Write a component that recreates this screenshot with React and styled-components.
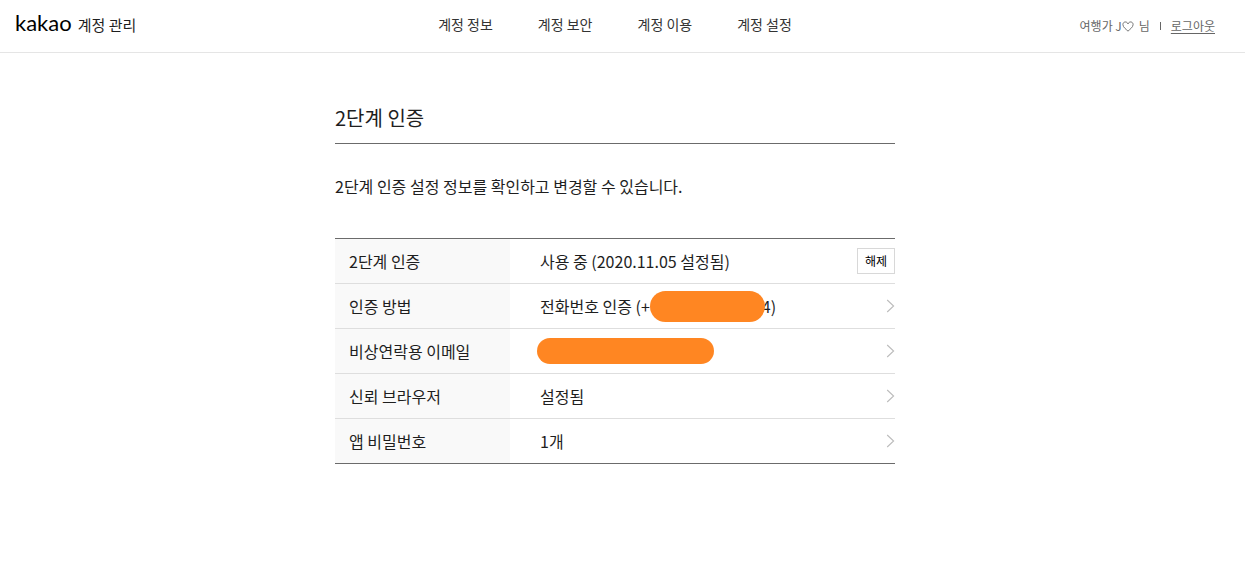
import styled, { createGlobalStyle } from 'styled-components'

const menus = ['계정 정보', '계정 보안', '계정 이용', '계정 설정']

const Arrow = () => (
  <svg width="9" height="14" viewBox="0 0 9 14" fill="none" aria-hidden="true">
    <path d="M1.2 1 L7.6 7 L1.2 13" stroke="#bcbcbc" strokeWidth="1.1" />
  </svg>
)

const SettingRow = ({ label, action, children }) => {
  return (
    <tr>
      <Label scope="row">{label}</Label>
      <Cell>
        <CellContent>
          <Value>{children}</Value>
          {action || (
            <MoreLink href="#" aria-label={label}>
              <Arrow />
            </MoreLink>
          )}
        </CellContent>
      </Cell>
    </tr>
  )
}

const App = () => {
  return (
    <>
      <GlobalStyle />
      <Header>
        <Brand href="#">
          <Logo>kakao</Logo>
          <ServiceName>계정 관리</ServiceName>
        </Brand>
        <Nav>
          {menus.map(menu => (
            <NavLink href="#" key={menu}>{menu}</NavLink>
          ))}
        </Nav>
        <UserInfo>
          <UserName>
            여행가 J
            <svg width="12" height="11" viewBox="0 0 12 11" fill="none" role="img" aria-label="♡">
              <path
                d="M6 10.2 C4.6 8.6 0.9 6.4 0.9 3.6 C0.9 0.4 5 0 6 2.9 C7 0 11.1 0.4 11.1 3.6 C11.1 6.4 7.4 8.6 6 10.2 Z"
                stroke="#666"
                strokeWidth="0.9"
              />
            </svg>
            <Honorific>님</Honorific>
          </UserName>
          <Divider />
          <Logout href="#">로그아웃</Logout>
        </UserInfo>
      </Header>
      <Main>
        <Title>2단계 인증</Title>
        <Description>2단계 인증 설정 정보를 확인하고 변경할 수 있습니다.</Description>
        <Table>
          <tbody>
            <SettingRow label="2단계 인증" action={<Button type="button">해제</Button>}>
              사용 중 (2020.11.05 설정됨)
            </SettingRow>
            <SettingRow label="인증 방법">
              전화번호 인증 (+<PhoneMask />4)
            </SettingRow>
            <SettingRow label="비상연락용 이메일">
              <EmailMask />
            </SettingRow>
            <SettingRow label="신뢰 브라우저">설정됨</SettingRow>
            <SettingRow label="앱 비밀번호">1개</SettingRow>
          </tbody>
        </Table>
      </Main>
    </>
  )
}

const GlobalStyle = createGlobalStyle`
  * {
    box-sizing: border-box;
  }
  body {
    margin: 0;
    background-color: #fff;
    color: #1e1e1e;
    font-family: 'Noto Sans CJK KR', 'Liberation Sans', sans-serif;
    font-size: 16px;
    line-height: 24px;
  }
  a {
    color: inherit;
    text-decoration: none;
  }
`

const Header = styled.header`
  display: grid;
  grid-template-columns: 1fr auto 1fr;
  align-items: center;
  height: 53px;
  padding: 0 30px 4px 15px;
  border-bottom: 1px solid #e5e5e5;
`

const Brand = styled.a`
  display: flex;
  align-items: baseline;
  gap: 6px;
  color: #000;
`

const Logo = styled.span`
  font-family: Lato, 'Open Sans', sans-serif;
  font-size: 22px;
`

const ServiceName = styled.span`
  font-size: 15px;
  color: #1e1e1e;
`

const Nav = styled.nav`
  display: flex;
  gap: 45px;
`

const NavLink = styled.a`
  font-size: 14px;
  color: #333;
`

const UserInfo = styled.div`
  display: flex;
  justify-content: flex-end;
  align-items: center;
  gap: 10px;
  padding-top: 4px;
  font-size: 12px;
  line-height: 18px;
  color: #666;
`

const UserName = styled.span`
  display: flex;
  align-items: center;
`

const Honorific = styled.span`
  margin-left: 5px;
`

const Divider = styled.span`
  width: 1px;
  height: 8px;
  background-color: #666;
`

const Logout = styled.a`
  text-decoration: underline;
  text-underline-offset: 2px;
`

const Main = styled.main`
  max-width: 575px;
  margin: 0 auto;
  padding: 50px 15px 50px 0;
`

const Title = styled.h1`
  margin: 0;
  padding-bottom: 10px;
  border-bottom: 1px solid #6b6b6b;
  font-size: 20px;
  font-weight: 400;
  line-height: 30px;
`

const Description = styled.p`
  margin: 30px 0 40px;
`

const Table = styled.table`
  width: 100%;
  border-top: 1px solid #6b6b6b;
  border-spacing: 0;

  tr:last-child > * {
    border-bottom-color: #6b6b6b;
  }
`

const Label = styled.th`
  width: 175px;
  height: 45px;
  padding: 0 0 0 14px;
  border-bottom: 1px solid #dedede;
  background-color: #f9f9f9;
  font-weight: 400;
  text-align: left;
`

const Cell = styled.td`
  height: 45px;
  padding: 0 0 0 30px;
  border-bottom: 1px solid #dedede;
`

const CellContent = styled.div`
  display: flex;
  justify-content: space-between;
  align-items: center;
`

const Value = styled.div`
  display: flex;
  align-items: center;
`

const Mask = styled.span`
  background-color: #ff8622;
`

// sits over the start of the last digit
const PhoneMask = styled(Mask)`
  position: relative;
  width: 115px;
  height: 31px;
  margin-right: -3px;
  border-radius: 16px;
`

const EmailMask = styled(Mask)`
  width: 177px;
  height: 26px;
  margin-left: -3px;
  border-radius: 13px;
`

const Button = styled.button`
  padding: 3px 7px;
  border: 1px solid #d8d8d8;
  background-color: #fff;
  color: #000;
  font-family: inherit;
  font-size: 12px;
  line-height: 18px;
`

const MoreLink = styled.a`
  display: flex;
`

export default App
